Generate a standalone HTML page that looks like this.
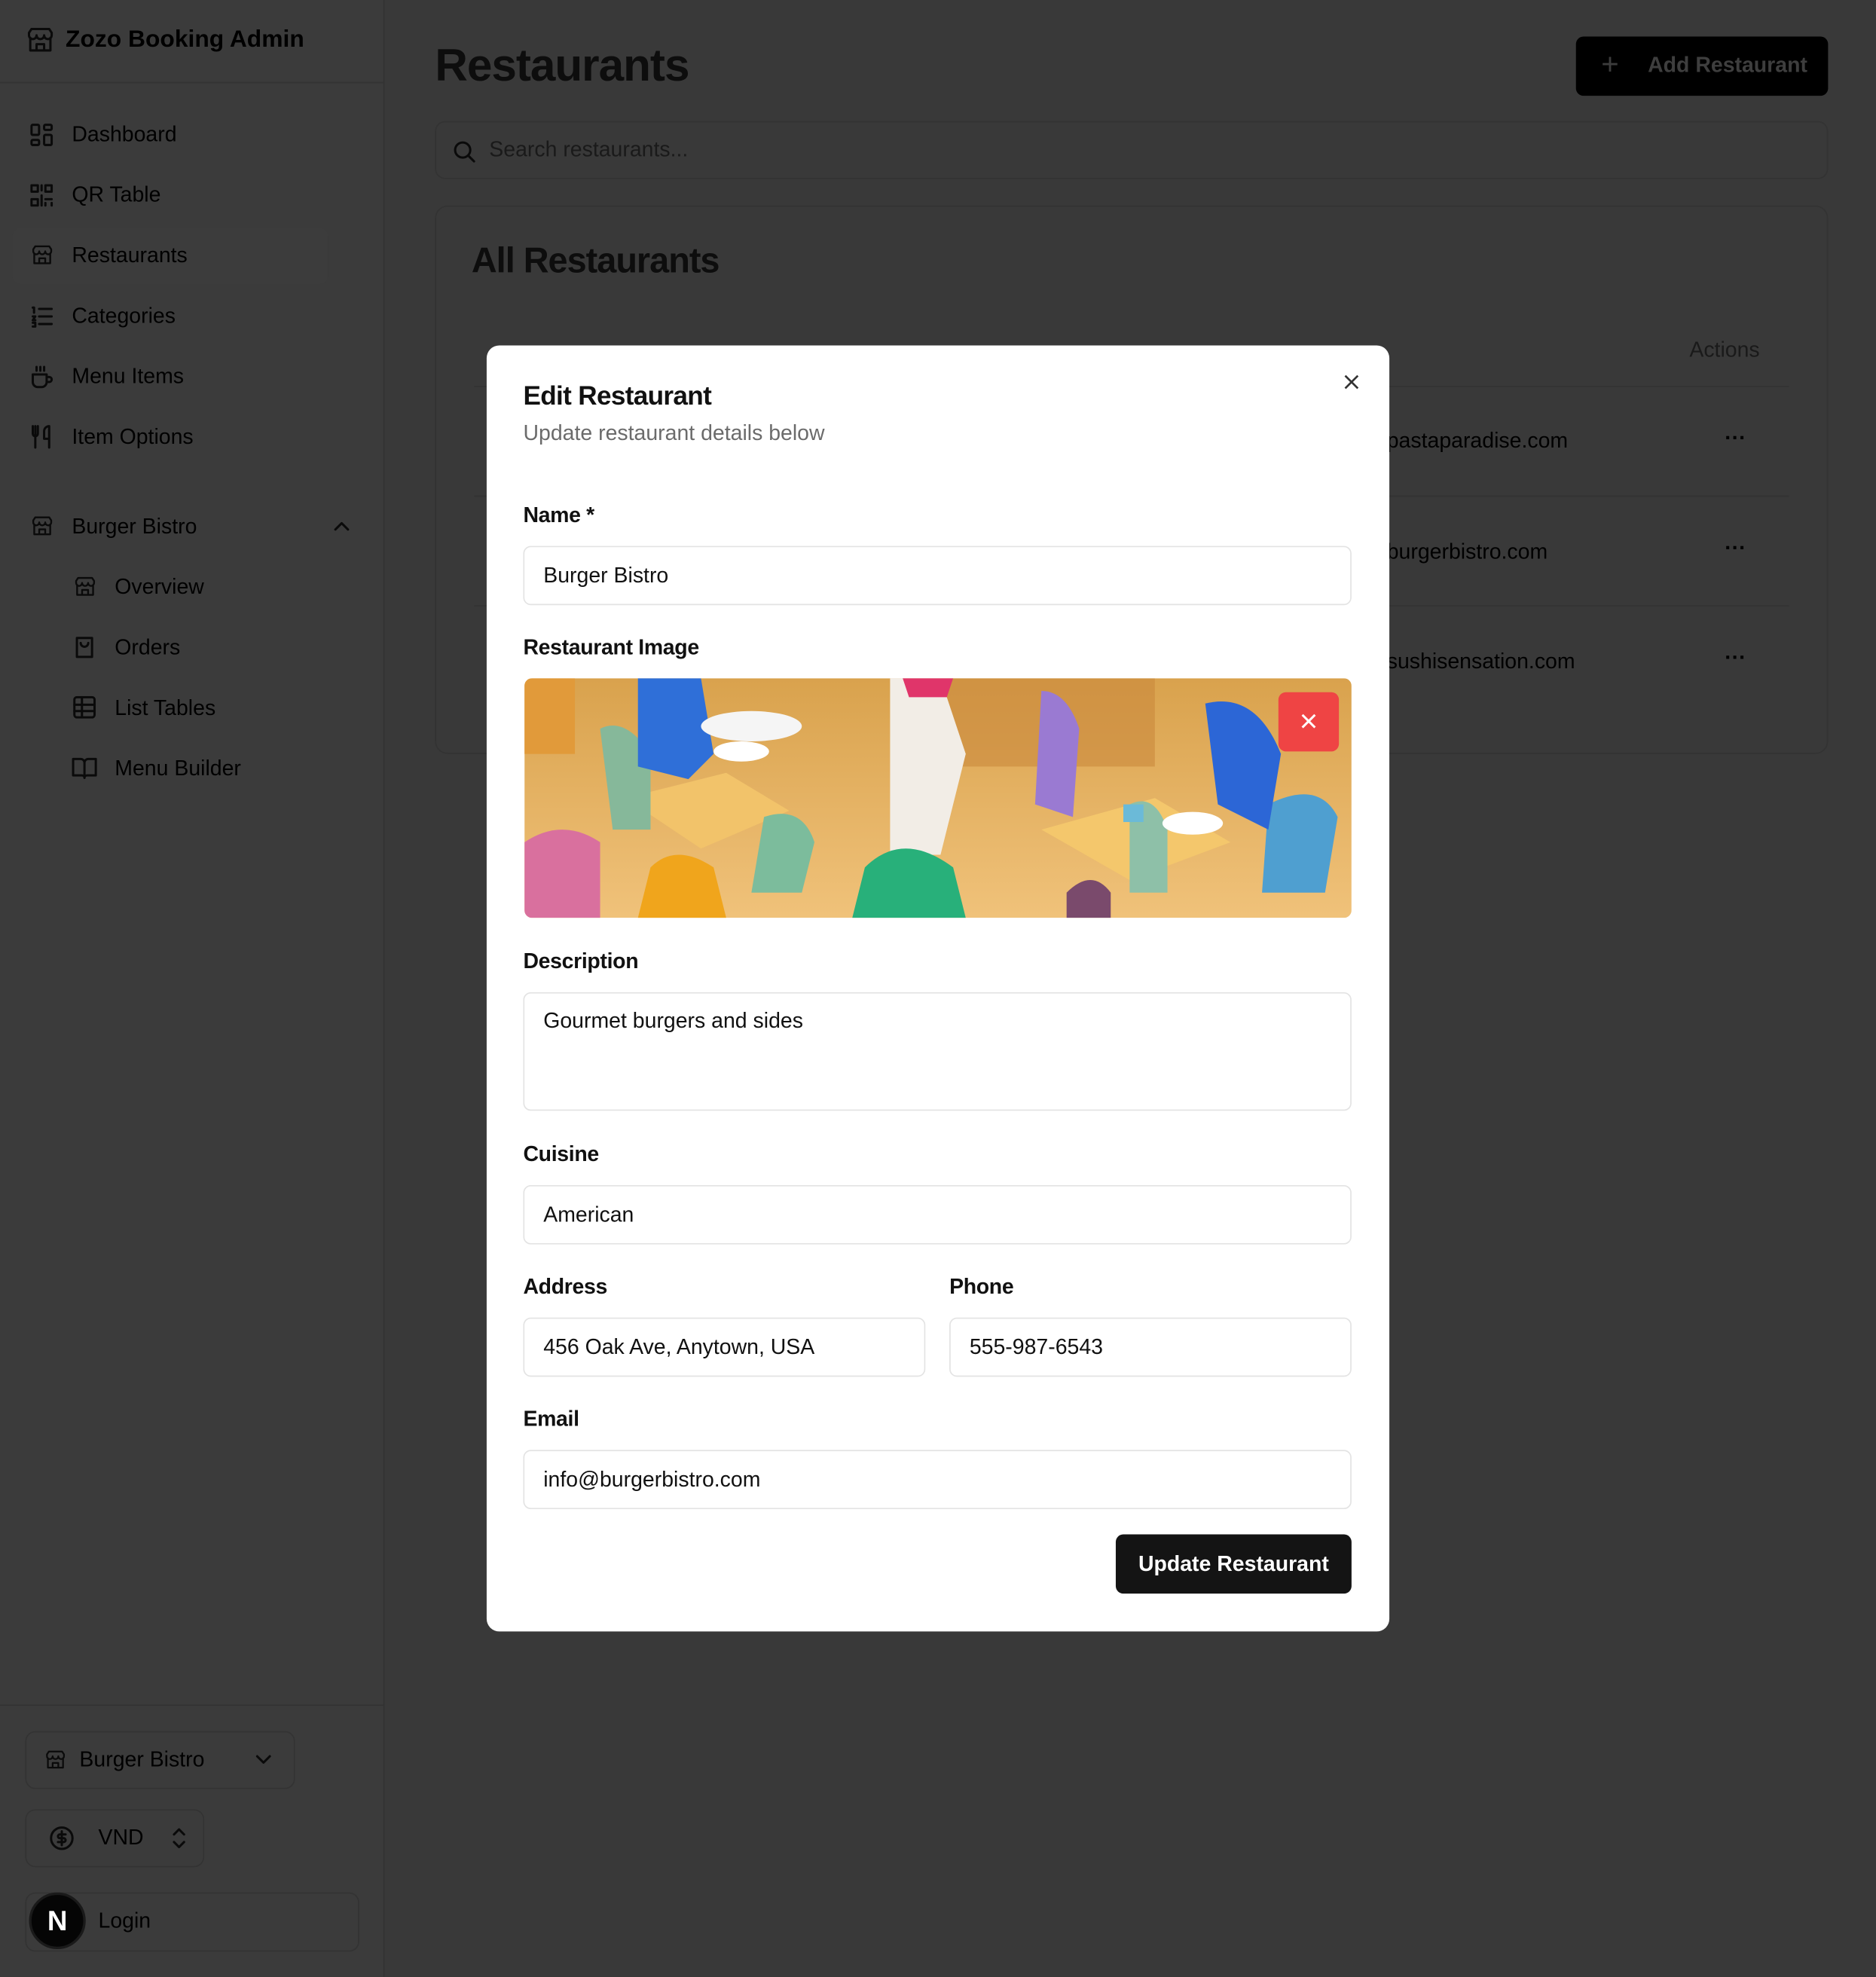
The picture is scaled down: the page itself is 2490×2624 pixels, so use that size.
<!DOCTYPE html>
<html><head><meta charset="utf-8"><style>
*{box-sizing:border-box;margin:0;padding:0}
html,body{width:2490px;height:2624px;overflow:hidden;background:#393939}
#w{position:absolute;left:0;top:0;width:1488px;height:1568px;transform:scale(1.67339);transform-origin:0 0;font-family:"Liberation Sans",sans-serif;color:#111;background:#393939}
.a{position:absolute}
.sb{left:0;top:0;width:305px;height:1568px;background:#3b3b3b;border-right:1px solid #333}
.nav{font-size:17px;color:#000;white-space:nowrap}
.ic{stroke:#0a0a0a;fill:none;stroke-width:1.8;stroke-linecap:round;stroke-linejoin:round}
.lbl{font-size:17px;font-weight:bold;color:#111;letter-spacing:-.2px}
.inp{border:1px solid #e3e3e3;border-radius:6px;background:#fff;font-size:17px;padding-left:15px;display:flex;align-items:center;color:#111}
.box{border:1px solid #333;border-radius:8px}
</style></head><body><div id="w">
<div class="a sb"></div>
<div class="a" style="left:0;top:65px;width:305px;height:1px;background:#333"></div>
<div class="a" style="left:0;top:1352px;width:305px;height:1px;background:#333"></div>
<svg class="a ic" style="left:20px;top:20px" width="24" height="24" viewBox="0 0 24 24"><path d="M4 10v10h16V10M3 6l2-3h14l2 3v2a3 3 0 0 1-6 0 3 3 0 0 1-6 0 3 3 0 0 1-6 0zM9 20v-5h6v5"/></svg>
<div class="a nav" style="left:52px;top:21px;font-size:19px;font-weight:bold">Zozo Booking Admin</div>
<div class="a" style="left:10px;top:181px;width:250px;height:44px;background:#3c3c3c;border-radius:6px"></div>
<svg class="a ic" style="left:24px;top:98px" width="18" height="18" viewBox="0 0 18 18"><rect x="1" y="1" width="6" height="8" rx="1"/><rect x="11" y="1" width="6" height="4" rx="1"/><rect x="11" y="9" width="6" height="8" rx="1"/><rect x="1" y="13" width="6" height="4" rx="1"/></svg>
<div class="a nav" style="left:57px;top:97px">Dashboard</div>
<svg class="a ic" style="left:24px;top:146px" width="18" height="18" viewBox="0 0 18 18"><rect x="1" y="1" width="5" height="5"/><rect x="12" y="1" width="5" height="5"/><rect x="1" y="12" width="5" height="5"/><path d="M12 12h5M12 17v-2M17 17v-2M9 1v4M9 9v8"/></svg>
<div class="a nav" style="left:57px;top:145px">QR Table</div>
<svg class="a ic" style="left:24px;top:193px" width="19" height="19" viewBox="0 0 24 24"><path d="M4 10v10h16V10M3 6l2-3h14l2 3v2a3 3 0 0 1-6 0 3 3 0 0 1-6 0 3 3 0 0 1-6 0zM9 20v-5h6v5"/></svg>
<div class="a nav" style="left:57px;top:193px">Restaurants</div>
<svg class="a ic" style="left:24px;top:242px" width="18" height="18" viewBox="0 0 18 18"><path d="M7 3h10M7 9h10M7 15h10M2 2h1v4M2 9h2l-2 3h2M2 14h2v3H2"/></svg>
<div class="a nav" style="left:57px;top:241px">Categories</div>
<svg class="a ic" style="left:24px;top:289px" width="18" height="19" viewBox="0 0 18 19"><path d="M2 8h11v6a4 4 0 0 1-4 4H6a4 4 0 0 1-4-4zM13 10h2a2 2 0 0 1 0 4h-2M5 2v3M8 2v3M11 2v3"/></svg>
<div class="a nav" style="left:57px;top:289px">Menu Items</div>
<svg class="a ic" style="left:24px;top:337px" width="18" height="19" viewBox="0 0 18 19"><path d="M2 1v6a2 2 0 0 0 4 0V1M4 1v17M15 12V1a4 4 0 0 0-4 4v6h4M15 12v6"/></svg>
<div class="a nav" style="left:57px;top:337px">Item Options</div>
<svg class="a ic" style="left:24px;top:408px" width="19" height="19" viewBox="0 0 24 24"><path d="M4 10v10h16V10M3 6l2-3h14l2 3v2a3 3 0 0 1-6 0 3 3 0 0 1-6 0 3 3 0 0 1-6 0zM9 20v-5h6v5"/></svg>
<div class="a nav" style="left:57px;top:408px">Burger Bistro</div>
<svg class="a ic" style="left:264px;top:412px" width="14" height="10" viewBox="0 0 14 10"><path d="M2 8l5-5 5 5"/></svg>
<svg class="a ic" style="left:58px;top:456px" width="19" height="19" viewBox="0 0 24 24"><path d="M4 10v10h16V10M3 6l2-3h14l2 3v2a3 3 0 0 1-6 0 3 3 0 0 1-6 0 3 3 0 0 1-6 0zM9 20v-5h6v5"/></svg>
<div class="a nav" style="left:91px;top:456px">Overview</div>
<svg class="a ic" style="left:58px;top:504px" width="18" height="19" viewBox="0 0 18 19"><path d="M3 2h12v15H3zM6 6a3 3 0 0 0 6 0"/></svg>
<div class="a nav" style="left:91px;top:504px">Orders</div>
<svg class="a ic" style="left:58px;top:552px" width="18" height="18" viewBox="0 0 18 18"><rect x="1" y="1" width="16" height="16" rx="2"/><path d="M1 7h16M1 12h16M7 1v16"/></svg>
<div class="a nav" style="left:91px;top:552px">List Tables</div>
<svg class="a ic" style="left:57px;top:600px" width="20" height="18" viewBox="0 0 20 18"><path d="M1 2h6a3 3 0 0 1 3 3v12a2 2 0 0 0-2-2H1zM19 2h-6a3 3 0 0 0-3 3v12a2 2 0 0 1 2-2h7z"/></svg>
<div class="a nav" style="left:91px;top:600px">Menu Builder</div>

<div class="a box" style="left:20px;top:1373px;width:214px;height:46px"></div>
<svg class="a ic" style="left:35px;top:1387px" width="18" height="18" viewBox="0 0 24 24"><path d="M4 10v10h16V10M3 6l2-3h14l2 3v2a3 3 0 0 1-6 0 3 3 0 0 1-6 0 3 3 0 0 1-6 0zM9 20v-5h6v5"/></svg>
<div class="a nav" style="left:63px;top:1386px">Burger Bistro</div>
<svg class="a ic" style="left:202px;top:1391px" width="14" height="10" viewBox="0 0 14 10" stroke="#222"><path d="M2 2l5 5 5-5"/></svg>
<div class="a box" style="left:20px;top:1435px;width:142px;height:46px"></div>
<svg class="a ic" style="left:39px;top:1448px" width="20" height="20" viewBox="0 0 20 20"><circle cx="10" cy="10" r="8.5"/><path d="M13 7H8.5a1.5 1.5 0 0 0 0 3h3a1.5 1.5 0 0 1 0 3H7M10 4.5v11"/></svg>
<div class="a nav" style="left:78px;top:1448px">VND</div>
<svg class="a ic" style="left:136px;top:1449px" width="12" height="18" viewBox="0 0 12 18" stroke="#2a2a2a"><path d="M2 6l4-4 4 4M2 12l4 4 4-4"/></svg>
<div class="a box" style="left:20px;top:1501px;width:265px;height:47px"></div>
<div class="a" style="left:23px;top:1501px;width:45px;height:45px;border-radius:50%;background:#050505;border:2px solid #1a1a1a;color:#fff;font-size:22px;font-weight:bold;display:flex;align-items:center;justify-content:center">N</div>
<div class="a nav" style="left:78px;top:1514px">Login</div>

<div class="a" style="left:345px;top:31px;font-size:36px;font-weight:bold;color:#0d0d0d;letter-spacing:-.6px">Restaurants</div>
<div class="a" style="left:1250px;top:29px;width:200px;height:47px;background:#000;border-radius:6px"></div>
<div class="a" style="left:1270px;top:38px;font-size:24px;color:#3c3c3c">+</div>
<div class="a" style="left:1307px;top:42px;font-size:17px;font-weight:bold;color:#3e3e3e">Add Restaurant</div>
<div class="a box" style="left:345px;top:96px;width:1105px;height:46px"></div>
<svg class="a ic" style="left:359px;top:111px" width="18" height="18" viewBox="0 0 18 18" stroke="#1e1e1e"><circle cx="8" cy="8" r="6"/><path d="M13 13l4 4"/></svg>
<div class="a nav" style="left:388px;top:109px;color:#1a1a1a">Search restaurants...</div>
<div class="a box" style="left:345px;top:163px;width:1105px;height:435px;border-radius:10px"></div>
<div class="a" style="left:374px;top:191px;font-size:28px;font-weight:bold;color:#0d0d0d;letter-spacing:-.6px">All Restaurants</div>
<div class="a nav" style="left:1340px;top:268px;color:#1a1a1a">Actions</div>
<div class="a" style="left:376px;top:306px;width:1043px;height:1px;background:#333"></div>
<div class="a" style="left:376px;top:393px;width:1043px;height:1px;background:#333"></div>
<div class="a" style="left:376px;top:480px;width:1043px;height:1px;background:#333"></div>
<div class="a nav" style="left:1100px;top:340px">pastaparadise.com</div>
<div class="a nav" style="left:1100px;top:428px">burgerbistro.com</div>
<div class="a nav" style="left:1100px;top:515px">sushisensation.com</div>
<div class="a nav" style="left:1368px;top:338px;font-weight:bold">···</div>
<div class="a nav" style="left:1368px;top:425px;font-weight:bold">···</div>
<div class="a nav" style="left:1368px;top:512px;font-weight:bold">···</div>

<div class="a" style="left:386px;top:274px;width:716px;height:1020px;background:#fff;border-radius:10px"></div>
<svg class="a" style="left:1065px;top:296px" width="14" height="14" viewBox="0 0 14 14" stroke="#333" stroke-width="1.6" fill="none"><path d="M2 2l10 10M12 2L2 12"/></svg>
<div class="a" style="left:415px;top:303px;font-size:21px;font-weight:bold;letter-spacing:-.4px">Edit Restaurant</div>
<div class="a" style="left:415px;top:334px;font-size:17px;color:#6b6b6b">Update restaurant details below</div>
<div class="a lbl" style="left:415px;top:399px">Name *</div>
<div class="a inp" style="left:415px;top:433px;width:657px;height:47px">Burger Bistro</div>
<div class="a lbl" style="left:415px;top:504px">Restaurant Image</div>
<svg class="a" style="left:416px;top:538px;border-radius:6px" width="656" height="190" viewBox="0 0 656 190">
<defs><linearGradient id="g" x1="0" y1="0" x2="0" y2="1"><stop offset="0" stop-color="#d9a24d"/><stop offset="1" stop-color="#f0c27a"/></linearGradient></defs>
<rect width="656" height="190" fill="url(#g)"/>
<rect x="300" y="0" width="200" height="70" fill="#c9883c" opacity=".6"/>
<path d="M80 95l80-20 50 30-70 30z" fill="#f2c36a"/><path d="M410 120l90-25 60 35-80 30z" fill="#f4c76c"/>
<path d="M0 130q30-20 60 0v60H0z" fill="#d9709e"/><path d="M60 40q20-10 40 20v60H70z" fill="#86b89a"/>
<path d="M190 110q30-10 40 20l-10 40h-40z" fill="#7cbc9c"/><path d="M480 100q20-10 30 20v50h-30z" fill="#8ec0a8"/>
<path d="M590 100q40-20 55 10l-10 60h-50z" fill="#4f9fd0"/>
<path d="M90 0h50l10 60-20 20-40-10z" fill="#2f6fd8"/><path d="M540 20q40-10 60 40l-10 60-40-20z" fill="#2c66d6"/>
<path d="M290 0h40l20 60-20 80h-40z" fill="#f2ede6"/><path d="M300 0h40l-5 15h-30z" fill="#e0356a"/>
<path d="M410 10q20 0 30 30l-5 70-30-10z" fill="#9a7ad2"/>
<path d="M100 150q20-20 50 0l10 40H90z" fill="#f0a51c"/><path d="M270 150q30-30 70 0l10 40h-90z" fill="#28b07a"/>
<path d="M430 170q20-20 35 0v20h-35z" fill="#7a4a6c"/>
<ellipse cx="180" cy="38" rx="40" ry="12" fill="#f5f5f5"/><ellipse cx="172" cy="58" rx="22" ry="8" fill="#fff"/>
<ellipse cx="530" cy="115" rx="24" ry="9" fill="#fff"/><rect x="475" y="100" width="16" height="14" fill="#6bbad8"/>
<rect x="0" y="0" width="40" height="60" fill="#e19a3a"/>
</svg>
<div class="a" style="left:1014px;top:549px;width:48px;height:47px;background:#ef4444;border-radius:6px"></div>
<svg class="a" style="left:1032px;top:566px" width="12" height="12" viewBox="0 0 12 12" stroke="#fff" stroke-width="1.8"><path d="M1 1l10 10M11 1L1 11"/></svg>
<div class="a lbl" style="left:415px;top:753px">Description</div>
<div class="a inp" style="left:415px;top:787px;width:657px;height:94px;align-items:flex-start;padding-top:12px">Gourmet burgers and sides</div>
<div class="a lbl" style="left:415px;top:906px">Cuisine</div>
<div class="a inp" style="left:415px;top:940px;width:657px;height:47px">American</div>
<div class="a lbl" style="left:415px;top:1011px">Address</div>
<div class="a lbl" style="left:753px;top:1011px">Phone</div>
<div class="a inp" style="left:415px;top:1045px;width:319px;height:47px">456 Oak Ave, Anytown, USA</div>
<div class="a inp" style="left:753px;top:1045px;width:319px;height:47px">555-987-6543</div>
<div class="a lbl" style="left:415px;top:1116px">Email</div>
<div class="a inp" style="left:415px;top:1150px;width:657px;height:47px">info@burgerbistro.com</div>
<div class="a" style="left:885px;top:1217px;width:187px;height:47px;background:#141414;border-radius:6px;color:#fff;font-size:17px;font-weight:bold;display:flex;align-items:center;justify-content:center">Update Restaurant</div>
</div></body></html>
